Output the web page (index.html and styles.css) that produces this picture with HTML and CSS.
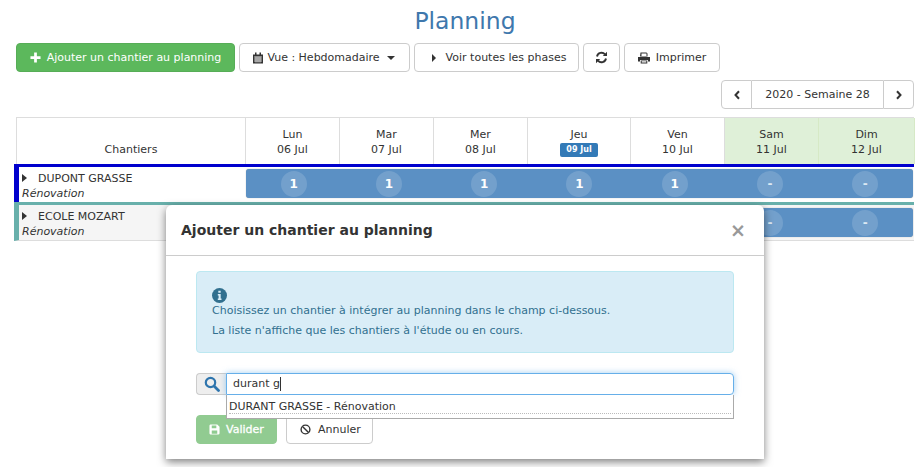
FILE: index.html
```html
<!DOCTYPE html>
<html lang="fr">
<head>
    <meta charset="UTF-8">
    <title>Planning</title>
    <link rel="stylesheet" href="styles.css">
</head>
<body>
    <h1 class="title">Planning</h1>

    <div class="toolbar">
        <button class="btn btn-add">
            <svg class="ico" width="11" height="11" viewBox="0 0 12 12"><path d="M4.500 .5h3v4h4v3h-4v4h-3v-4h-4v-3h4z" fill="#fff"/></svg>
            Ajouter un chantier au planning
        </button>
        <button class="btn btn-vue">
            <svg class="ico" width="12" height="12" viewBox="0 0 12 12"><path d="M1 2.500h10v9h-10z M3 .5h1.500v2.500h-1.500z M7.500 .5h1.500v2.500h-1.500z" fill="#333"/><path d="M2 5h8M2 7h8M2 9h8M4 4.500v6M6 4.500v6M8 4.500v6" stroke="#fff" stroke-width=".7"/></svg>
            Vue : Hebdomadaire
            <span class="caret-down"></span>
        </button>
        <button class="btn btn-phases">
            <span class="caret-right"></span>
            Voir toutes les phases
        </button>
        <button class="btn btn-refresh">
            <svg width="13" height="13" viewBox="0 0 13 13"><path d="M2 5.500a4.600 4.600 0 0 1 8-2.200M11 7.500a4.600 4.600 0 0 1-8 2.200" fill="none" stroke="#333" stroke-width="1.900"/><path d="M12 .8v4.200h-4.200zM1 12.200v-4.200h4.200z" fill="#333"/></svg>
        </button>
        <button class="btn btn-print">
            <svg class="ico" width="12" height="12" viewBox="0 0 12 12"><path d="M2.500 .5h6l1 1v3h-7.500z M0 5h12v4.500h-2v-1.500h-8v1.500h-2z M2.700 8.500h6.600v3h-6.600z" fill="#333"/><path d="M3.500 1.500h5v2.500h-5zM3.700 9.300h4.600v1.300h-4.600z" fill="#fff"/></svg>
            Imprimer
        </button>
    </div>

    <div class="week-nav">
        <button class="nav-btn"><svg width="8" height="10" viewBox="0 0 8 10"><path d="M6 1.200l-3.500 3.800 3.500 3.800" fill="none" stroke="#333" stroke-width="2"/></svg></button>
        <span class="nav-label">2020 - Semaine 28</span>
        <button class="nav-btn"><svg width="8" height="10" viewBox="0 0 8 10"><path d="M2 1.200l3.500 3.800-3.500 3.800" fill="none" stroke="#333" stroke-width="2"/></svg></button>
    </div>

    <div class="planning">
        <div class="head-row">
            <div class="head-cell head-name">Chantiers</div>
            <div class="head-cell">Lun<br>06 Jul</div>
            <div class="head-cell">Mar<br>07 Jul</div>
            <div class="head-cell">Mer<br>08 Jul</div>
            <div class="head-cell">Jeu<br><span class="today">09 Jul</span></div>
            <div class="head-cell">Ven<br>10 Jul</div>
            <div class="head-cell weekend">Sam<br>11 Jul</div>
            <div class="head-cell weekend">Dim<br>12 Jul</div>
        </div>

        <div class="site-row site-blue">
            <div class="site-name">
                <div><span class="caret-site"></span>DUPONT GRASSE</div>
                <em>Rénovation</em>
            </div>
            <div class="site-bar">
                <span class="slot"><b>1</b></span>
                <span class="slot"><b>1</b></span>
                <span class="slot"><b>1</b></span>
                <span class="slot"><b>1</b></span>
                <span class="slot"><b>1</b></span>
                <span class="slot"><b class="off">-</b></span>
                <span class="slot"><b class="off">-</b></span>
            </div>
        </div>

        <div class="site-row site-teal">
            <div class="site-name">
                <div><span class="caret-site"></span>ECOLE MOZART</div>
                <em>Rénovation</em>
            </div>
            <div class="site-bar">
                <span class="slot"></span>
                <span class="slot"></span>
                <span class="slot"></span>
                <span class="slot"></span>
                <span class="slot"></span>
                <span class="slot"><b class="off">-</b></span>
                <span class="slot"><b class="off">-</b></span>
            </div>
        </div>
    </div>

    <div class="modal">
        <div class="modal-head">
            <h4>Ajouter un chantier au planning</h4>
            <span class="close">×</span>
        </div>
        <div class="modal-body">
            <div class="alert">
                <svg class="info" width="15" height="15" viewBox="0 0 15 15"><circle cx="7.500" cy="7.500" r="7.500" fill="#31708f"/><path d="M6.300 2.800h2.400v2h-2.400zM5.800 6h2.900v4.400h.8v1.500h-3.700v-1.500h.8v-2.900h-.8z" fill="#d9edf7"/></svg>
                <p>Choisissez un chantier à intégrer au planning dans le champ ci-dessous.</p>
                <p>La liste n'affiche que les chantiers à l'étude ou en cours.</p>
            </div>

            <div class="search">
                <span class="search-addon">
                    <svg width="16" height="16" viewBox="0 0 16 16"><circle cx="6.500" cy="6.500" r="4.700" fill="none" stroke="#2f75ad" stroke-width="2.200"/><path d="M10 10l4.500 4.500" stroke="#2f75ad" stroke-width="2.800" stroke-linecap="round"/></svg>
                </span>
                <div class="search-input">durant g<i class="cursor"></i></div>
            </div>

            <div class="actions">
                <button class="btn btn-save">
                    <svg class="ico" width="11" height="11" viewBox="0 0 12 12"><path d="M1.500 .5h7.500l2.500 2.500v7a1.500 1.500 0 0 1-1.500 1.500h-8.500a1.500 1.500 0 0 1-1-1.500v-8a1.500 1.500 0 0 1 1-1.500z" fill="#fff"/><path d="M3 1.500h5v3h-5zM3 7h6v3.500h-6z" fill="#8fcc90"/></svg>
                    Valider
                </button>
                <button class="btn btn-cancel">
                    <svg class="ico" width="11" height="11" viewBox="0 0 12 12"><circle cx="6" cy="6" r="4.800" fill="none" stroke="#333" stroke-width="1.500"/><path d="M2.700 2.700l6.600 6.600" stroke="#333" stroke-width="1.500"/></svg>
                    Annuler
                </button>
                <div class="suggest"><span>DURANT GRASSE - Rénovation</span></div>
            </div>
        </div>
    </div>
</body>
</html>
```

FILE: styles.css
```css
* {
    box-sizing: border-box;
}
html, body {
    height: 467px;
    overflow: hidden;
}
body {
    margin: 0;
    padding: 0 3px 0 16px;
    font-family: "DejaVu Sans", Verdana, sans-serif;
    font-size: 11px;
    color: #333;
    background-color: #fff;
    position: relative;
}
.title {
    margin: 0;
    padding-top: 6px;
    height: 43px;
    text-align: center;
    font-size: 23.5px;
    line-height: 30px;
    font-weight: 400;
    color: #3f78ad;
}
.toolbar {
    display: flex;
    gap: 4px;
    height: 29px;
}
.btn {
    height: 29px;
    padding: 0;
    border: 1px solid #ccc;
    border-radius: 4px;
    background-color: #fff;
    color: #333;
    font-family: inherit;
    font-size: 11px;
    display: flex;
    align-items: center;
    justify-content: center;
}
.ico {
    margin-right: 6px;
    flex: none;
}
.btn-add {
    width: 219px;
    background-color: #5cb85c;
    border-color: #57ad57;
    color: #fff;
}
.btn-vue {
    width: 171px;
    padding-right: 2px;
}
.btn-vue .ico {
    margin-right: 3px;
}
.btn-phases {
    width: 165px;
    padding-left: 5px;
}
.btn-refresh {
    width: 37px;
}
.btn-print {
    width: 96px;
}
.caret-down {
    width: 0;
    height: 0;
    margin-left: 7px;
    border-left: 4px solid transparent;
    border-right: 4px solid transparent;
    border-top: 4px solid #333;
}
.caret-right {
    width: 0;
    height: 0;
    margin-right: 10px;
    border-top: 4px solid transparent;
    border-bottom: 4px solid transparent;
    border-left: 4px solid #333;
}
.week-nav {
    display: flex;
    justify-content: flex-end;
    height: 29px;
    margin-top: 8px;
}
.nav-btn {
    width: 31px;
    padding: 0;
    border: 1px solid #ccc;
    background-color: #fff;
    display: flex;
    align-items: center;
    justify-content: center;
}
.nav-btn:first-child {
    border-radius: 4px 0 0 4px;
}
.nav-btn:last-child {
    border-radius: 0 4px 4px 0;
}
.nav-label {
    width: 131px;
    border-top: 1px solid #ccc;
    border-bottom: 1px solid #ccc;
    text-align: center;
    line-height: 27px;
}
.planning {
    margin-top: 8px;
    width: 898px;
}
.head-row {
    display: grid;
    grid-template-columns: 229px 94px 94px 94px 103px 94px 94px 96px;
    height: 47px;
    border-top: 1px solid #ddd;
    border-left: 1px solid #ddd;
}
.head-cell {
    border-right: 1px solid #ddd;
    text-align: center;
    line-height: 15px;
    padding-top: 9px;
}
.head-name {
    padding-top: 24px;
}
.weekend {
    background-color: #dff0d8;
    border-right-color: #d6e9c6;
}
.today {
    display: inline-block;
    width: 38px;
    height: 14px;
    border-radius: 2px;
    background-color: #337ab7;
    color: #fff;
    font-size: 8px;
    font-weight: 700;
    line-height: 14px;
    vertical-align: top;
    margin-top: 1px;
}
.site-row {
    display: flex;
    margin-left: -2px;
    border-top: 3px solid;
    border-left: 5px solid;
}
.site-blue {
    height: 38px;
    border-color: #0000cd;
}
.site-teal {
    height: 39px;
    background-color: #f5f5f5;
    border-top-color: #68b0ab;
    border-left-color: #68b0ab;
    border-bottom: 1px solid #ddd;
}
.site-name {
    width: 226px;
    padding: 4px 0 0 3px;
    line-height: 15px;
    flex: none;
}
.site-name em {
    display: block;
}
.caret-site {
    display: inline-block;
    width: 0;
    height: 0;
    margin-right: 11px;
    border-top: 4px solid transparent;
    border-bottom: 4px solid transparent;
    border-left: 5px solid #333;
}
.site-bar {
    flex: 1;
    height: 29px;
    margin: 2px 1px 0;
    display: grid;
    grid-template-columns: repeat(7, 1fr);
    background-color: #5b90c4;
    border-radius: 3px;
    box-shadow: 0 0 1px #999;
}
.site-teal .site-bar {
    margin-top: 3px;
}
.slot {
    display: flex;
    align-items: center;
    justify-content: center;
}
.slot b {
    width: 26px;
    height: 26px;
    border-radius: 50%;
    background-color: rgba(255, 255, 255, 0.15);
    color: #fff;
    font-size: 12px;
    line-height: 26px;
    text-align: center;
}
.slot .off {
    color: #dce8f3;
}
.modal {
    position: absolute;
    left: 166px;
    top: 205px;
    width: 598px;
    height: 254px;
    background-color: #fff;
    border-radius: 6px 6px 0 0;
    box-shadow: 0 3px 9px rgba(0, 0, 0, 0.5);
}
.modal-head {
    height: 51px;
    padding: 0 15px;
    border-bottom: 1px solid #ccc;
    display: flex;
    align-items: center;
    justify-content: space-between;
}
.modal-head h4 {
    margin: 0;
    font-size: 14px;
    font-weight: 700;
    color: #333;
}
.close {
    font-size: 19px;
    font-weight: 700;
    color: #999;
    margin-right: 3px;
}
.modal-body {
    padding: 15px 30px 0;
}
.alert {
    height: 82px;
    padding: 16px 15px 0;
    background-color: #d9edf7;
    border: 1px solid #bce8f1;
    border-radius: 4px;
    color: #31708f;
}
.alert p {
    margin: 0;
    line-height: 20px;
}
.info {
    display: block;
    margin-bottom: -2px;
}
.search {
    display: flex;
    margin-top: 20px;
    height: 22px;
}
.search-addon {
    width: 30px;
    background-color: #eee;
    border: 1px solid #ccc;
    border-right: 0;
    border-radius: 4px 0 0 4px;
    display: flex;
    align-items: center;
    justify-content: center;
}
.search-input {
    flex: 1;
    padding-left: 6px;
    border: 1px solid #66afe9;
    border-radius: 0 4px 4px 0;
    box-shadow: 0 0 6px rgba(102, 175, 233, 0.6);
    line-height: 20px;
}
.cursor {
    display: inline-block;
    width: 1px;
    height: 14px;
    background-color: #333;
    vertical-align: middle;
}
.actions {
    display: flex;
    gap: 9px;
    margin-top: 20px;
    position: relative;
}
.btn-save {
    width: 81px;
    background-color: #91cb91;
    border-color: #91cb91;
    color: #fff;
    -webkit-text-stroke: 0.3px #fff;
}
.btn-cancel {
    width: 87px;
    padding-left: 2px;
}
.btn-cancel .ico {
    margin-right: 7px;
}
.suggest {
    position: absolute;
    left: 30px;
    top: -20px;
    width: 508px;
    height: 24px;
    padding: 4px 2px 0;
    background-color: #fff;
    border: 1px solid #aaa;
    border-top: 0;
    line-height: 15px;
}
.suggest span {
    display: block;
    height: 15px;
    border-bottom: 1px dotted #bbb;
}
```
